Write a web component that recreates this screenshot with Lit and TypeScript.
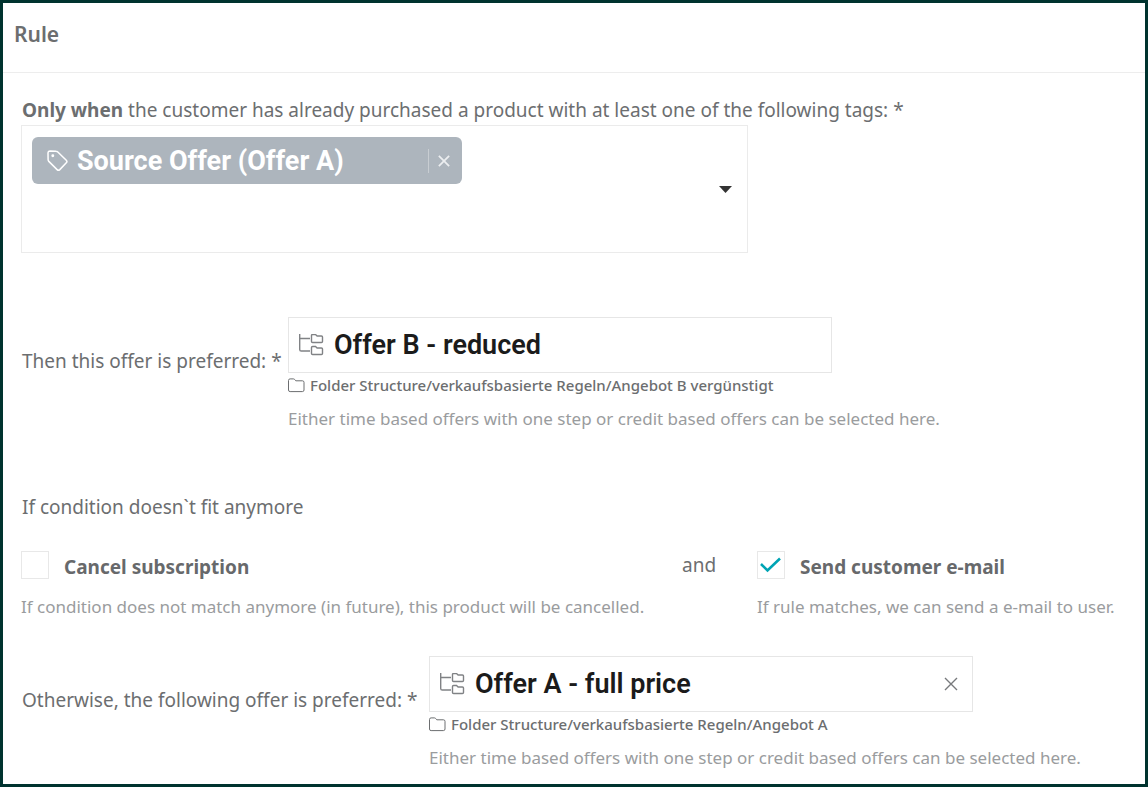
import { LitElement, html, css, svg, nothing } from "lit";
import { customElement, property, state } from "lit/decorators.js";

const cross = (size: number, weight: number) => html`
  <svg width=${size} height=${size} viewBox="0 0 14 14" fill="none" stroke="currentColor" stroke-width=${weight} aria-hidden="true">
    <path d="M1 1 L13 13 M13 1 L1 13" />
  </svg>
`;

const treeFolder = (y: number) => svg`
  <path d="M12.5 ${y + 1.6} q0 -1.1 1.1 -1.1 h2.9 l1.6 1.5 h4.3 q1.1 0 1.1 1.1 v4.3 q0 1.1 -1.1 1.1 h-8.8 q-1.1 0 -1.1 -1.1 z" />
`;

@customElement("offer-field")
export class OfferField extends LitElement {
  @property() label = "";
  @property() value = "";
  @property() path = "";
  @property({ type: Boolean }) clearable = false;

  static styles = css`
    :host {
      display: flex;
      align-items: flex-start;
      gap: 6px;
    }
    .label {
      box-sizing: border-box;
      flex: none;
      width: var(--label-width, auto);
      padding-top: 32px;
      font-size: 19px;
      line-height: 24px;
      white-space: nowrap;
    }
    .body {
      flex: 1;
      min-width: 0;
    }
    .control {
      box-sizing: border-box;
      display: flex;
      align-items: center;
      gap: 10px;
      max-width: 544px;
      height: 56px;
      padding: 0 14px 0 10px;
      border: 1px solid #e6e6e6;
    }
    .tree {
      flex: none;
      color: #808285;
    }
    .input {
      flex: 1;
      min-width: 0;
      padding: 0;
      border: 0;
      outline: 0;
      background: none;
      color: #1b1b1b;
      font: 600 27px/36px Roboto, sans-serif;
    }
    .clear {
      display: flex;
      padding: 0;
      border: 0;
      background: none;
      color: #77797c;
      cursor: pointer;
    }
    .path {
      display: flex;
      align-items: center;
      gap: 5px;
      font-size: 15px;
      line-height: 24px;
      font-weight: 500;
      color: #6c6e70;
    }
    .hint {
      margin: 10px 0 0;
      font-size: 17px;
      line-height: 24px;
      color: #9a9c9e;
    }
  `;

  render() {
    return html`
      <label class="label" for="offer">${this.label}</label>
      <div class="body">
        <div class="control">
          <svg class="tree" width="25" height="22" viewBox="0 0 25 22" fill="none" stroke="currentColor" stroke-width="1.4" aria-hidden="true">
            <path d="M0.7 0 V15.4 q0 1.6 1.6 1.6 H11 M0.7 4.5 H11" />
            ${treeFolder(0)} ${treeFolder(12)}
          </svg>
          <input class="input" id="offer" type="text" .value=${this.value} />
          ${this.clearable
            ? html`<button class="clear" type="button" aria-label="Clear">${cross(14, 1.4)}</button>`
            : nothing}
        </div>
        <div class="path">
          <svg width="17" height="15" viewBox="0 0 17 15" fill="none" stroke="currentColor" aria-hidden="true">
            <path d="M0.5 2.5 q0 -1.6 1.6 -1.6 h3.3 q0.8 0 1.3 0.6 l1.1 1.3 h6.6 q1.6 0 1.6 1.6 v7.6 q0 1.6 -1.6 1.6 h-12.3 q-1.6 0 -1.6 -1.6 z" />
          </svg>
          <span>${this.path}</span>
        </div>
        <p class="hint">Either time based offers with one step or credit based offers can be selected here.</p>
      </div>
    `;
  }
}

@customElement("check-option")
export class CheckOption extends LitElement {
  @property() label = "";
  @property() hint = "";
  @property({ type: Boolean }) checked = false;

  static styles = css`
    :host {
      display: block;
    }
    .row {
      display: flex;
      align-items: center;
      gap: 15px;
    }
    .mark {
      display: grid;
    }
    .box {
      grid-area: 1 / 1;
      appearance: none;
      box-sizing: border-box;
      width: 28px;
      height: 28px;
      margin: 0;
      border: 1px solid #e8e8e8;
    }
    .tick {
      grid-area: 1 / 1;
      place-self: center;
      pointer-events: none;
      visibility: hidden;
    }
    .box:checked + .tick {
      visibility: visible;
    }
    .label {
      padding-top: 4px;
      font-size: 19px;
      line-height: 24px;
      font-weight: 700;
      color: #67696b;
    }
    .hint {
      margin: 16px 0 0;
      font-size: 17px;
      line-height: 24px;
      color: #9a9c9e;
    }
  `;

  render() {
    return html`
      <div class="row">
        <span class="mark">
          <input class="box" id="box" type="checkbox" .checked=${this.checked} />
          <svg class="tick" width="22" height="16" viewBox="0 0 22 16" fill="none" stroke="#00a4b4" stroke-width="2.6" aria-hidden="true">
            <path d="M1 7 L7.5 13.5 L20 1.5" />
          </svg>
        </span>
        <label class="label" for="box">${this.label}</label>
      </div>
      <p class="hint">${this.hint}</p>
    `;
  }
}

@customElement("app-root")
export class AppRoot extends LitElement {
  @state() private tags = ["Source Offer (Offer A)"];

  static styles = css`
    :host {
      display: block;
      font-family: "Noto Sans", sans-serif;
      color: #6c6e70;
    }
    .panel {
      box-sizing: border-box;
      min-height: 100vh;
      border: 3px solid #00332f;
      background: #fff;
    }
    .header {
      padding: 17px 11px 24px;
      border-bottom: 1px solid #ededed;
    }
    .title {
      margin: 0;
      font-size: 21px;
      line-height: 28px;
      font-weight: 600;
    }
    .form {
      padding: 25px 18px 10px;
    }
    .lead {
      padding-left: 1px;
      font-size: 19px;
      line-height: 24px;
    }
    .strong {
      font-weight: 700;
    }
    .tags {
      box-sizing: border-box;
      display: flex;
      align-items: center;
      gap: 16px;
      max-width: 727px;
      min-height: 128px;
      margin-top: 3px;
      padding: 11px 15px 11px 10px;
      border: 1px solid #ebebeb;
    }
    .list {
      flex: 1;
      align-self: flex-start;
    }
    .tag {
      box-sizing: border-box;
      display: flex;
      align-items: center;
      gap: 9px;
      max-width: 430px;
      height: 47px;
      padding: 0 12px 0 15px;
      border-radius: 6px;
      background: #adb5bd;
      color: #fff;
      font: 700 27px/36px Roboto, sans-serif;
    }
    .name {
      flex: 1;
    }
    .remove {
      display: flex;
      padding: 6px 0 6px 9px;
      border: 0;
      border-left: 1px solid #c8cdd2;
      background: none;
      color: #eceef0;
      cursor: pointer;
    }
    .toggle {
      display: flex;
      padding: 0;
      border: 0;
      background: none;
      color: #333;
      cursor: pointer;
    }
    .preferred {
      --label-width: 260px;
      margin-top: 64px;
      padding-left: 1px;
    }
    .otherwise {
      --label-width: 401px;
      margin-top: 37px;
      padding-left: 1px;
    }
    .condition {
      margin: 64px 0 32px;
    }
    .options {
      display: grid;
      grid-template-columns: 1fr 75px 370px;
    }
    .and {
      font-size: 19px;
      line-height: 28px;
    }
  `;

  private clearTags() {
    this.tags = [];
  }

  render() {
    return html`
      <main class="panel">
        <header class="header"><h1 class="title">Rule</h1></header>
        <form class="form">
          <div class="lead" id="tags-label">
            <span class="strong">Only when</span> the customer has already purchased a product with at least one of the following tags: *
          </div>
          <div class="tags" role="group" aria-labelledby="tags-label">
            <div class="list">
              ${this.tags.map(
                (name) => html`
                  <div class="tag">
                    <svg width="21" height="22" viewBox="0 0 21 22" fill="none" stroke="currentColor" stroke-width="1.5" aria-hidden="true">
                      <path d="M1 3.2 Q1 1 3.2 1 L9 1.2 Q10 1.2 10.8 2 L19.3 10.2 Q20.6 11.5 19.3 12.8 L12.8 19.6 Q11.4 20.9 10.1 19.6 L1.8 11.4 Q1.1 10.6 1.1 9.6 Z" />
                      <circle cx="5.8" cy="5.8" r="0.7" />
                    </svg>
                    <span class="name">${name}</span>
                    <button class="remove" type="button" aria-label="Remove tag" @click=${this.clearTags}>${cross(12, 2)}</button>
                  </div>
                `
              )}
            </div>
            <button class="toggle" type="button" aria-label="Show tags">
              <svg width="13" height="7" viewBox="0 0 13 7" fill="currentColor" aria-hidden="true">
                <path d="M0 0 H13 L6.5 7 Z" />
              </svg>
            </button>
          </div>

          <offer-field
            class="preferred"
            label="Then this offer is preferred: *"
            value="Offer B - reduced"
            path="Folder Structure/verkaufsbasierte Regeln/Angebot B vergünstigt"
          ></offer-field>

          <div class="lead condition">If condition doesn\`t fit anymore</div>
          <div class="options">
            <check-option
              label="Cancel subscription"
              hint="If condition does not match anymore (in future), this product will be cancelled."
            ></check-option>
            <span class="and">and</span>
            <check-option
              label="Send customer e-mail"
              hint="If rule matches, we can send a e-mail to user."
              checked
            ></check-option>
          </div>

          <offer-field
            class="otherwise"
            label="Otherwise, the following offer is preferred: *"
            value="Offer A - full price"
            path="Folder Structure/verkaufsbasierte Regeln/Angebot A"
            clearable
          ></offer-field>
        </form>
      </main>
    `;
  }
}
